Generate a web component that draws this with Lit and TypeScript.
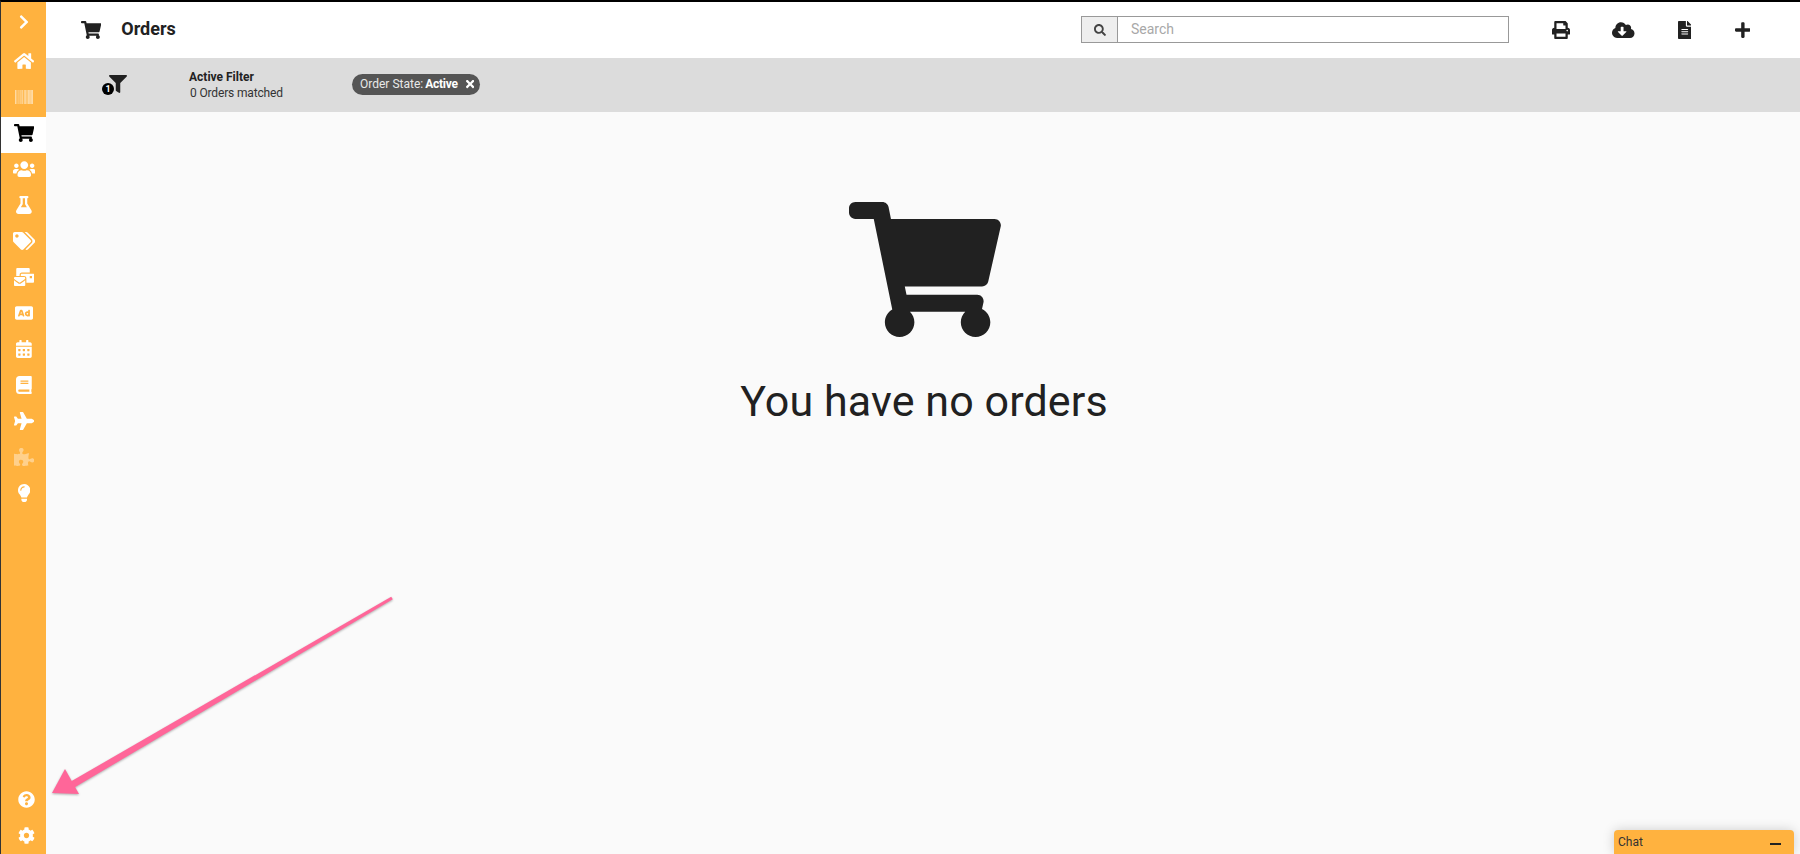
import { LitElement, html, svg, css } from "lit";
import { customElement } from "lit/decorators.js";

type Ic = [number, string];
const I: Record<string, Ic> = {
  cart: [576, "M528.12 301.319l47.273-208C578.806 78.301 567.391 64 551.99 64H159.208l-9.166-44.81C147.758 8.021 137.93 0 126.529 0H24C10.745 0 0 10.745 0 24v16c0 13.255 10.745 24 24 24h69.883l70.248 343.435C147.325 417.1 136 435.222 136 456c0 30.928 25.072 56 56 56s56-25.072 56-56c0-15.674-6.447-29.835-16.824-40h209.647C430.447 426.165 424 440.326 424 456c0 30.928 25.072 56 56 56s56-25.072 56-56c0-22.172-12.888-41.332-31.579-50.405l5.517-24.276c3.413-15.018-8.002-29.319-23.403-29.319H218.117l-6.545-32h293.145c11.206 0 20.92-7.754 23.403-18.681z"],
  chevron: [320, "M285.476 272.971L91.132 467.314c-9.373 9.373-24.569 9.373-33.941 0l-22.667-22.667c-9.357-9.357-9.375-24.522-.04-33.901L188.505 256 34.484 101.255c-9.335-9.379-9.317-24.544.04-33.901l22.667-22.667c9.373-9.373 24.569-9.373 33.941 0L285.475 239.03c9.373 9.372 9.373 24.568.001 33.941z"],
  home: [576, "M280.37 148.26L96 300.11V464a16 16 0 0 0 16 16l112.06-.29a16 16 0 0 0 15.92-16V368a16 16 0 0 1 16-16h64a16 16 0 0 1 16 16v95.64a16 16 0 0 0 16 16.05L464 480a16 16 0 0 0 16-16V300L295.67 148.26a12.19 12.19 0 0 0-15.3 0zM571.6 251.47L488 182.56V44.05a12 12 0 0 0-12-12h-56a12 12 0 0 0-12 12v72.61L318.47 43a48 48 0 0 0-61 0L4.34 251.47a12 12 0 0 0-1.6 16.9l25.5 31A12 12 0 0 0 45.15 301l235.22-193.74a12.19 12.19 0 0 1 15.3 0L530.9 301a12 12 0 0 0 16.9-1.6l25.5-31a12 12 0 0 0-1.7-16.93z"],
  users: [640, "M96 224c35.3 0 64-28.7 64-64s-28.7-64-64-64-64 28.7-64 64 28.7 64 64 64zm448 0c35.3 0 64-28.7 64-64s-28.7-64-64-64-64 28.7-64 64 28.7 64 64 64zm32 32h-64c-17.6 0-33.5 7.1-45.1 18.6 40.3 22.1 68.9 62 75.1 109.4h66c17.7 0 32-14.3 32-32v-32c0-35.3-28.7-64-64-64zm-256 0c61.9 0 112-50.1 112-112S381.9 32 320 32 208 82.1 208 144s50.1 112 112 112zm76.8 32h-8.3c-20.8 10-43.9 16-68.5 16s-47.6-6-68.5-16h-8.3C179.6 288 128 339.6 128 403.2V432c0 26.5 21.5 48 48 48h288c26.5 0 48-21.5 48-48v-28.8c0-63.6-51.6-115.2-115.2-115.2zm-223.7-13.4C161.5 263.1 145.6 256 128 256H64c-35.3 0-64 28.7-64 64v32c0 17.7 14.3 32 32 32h65.9c6.3-47.4 34.9-87.3 75.2-109.4z"],
  flask: [448, "M437.2 403.5L320 215V64h8c13.3 0 24-10.7 24-24V24c0-13.3-10.7-24-24-24H120c-13.3 0-24 10.7-24 24v16c0 13.3 10.7 24 24 24h8v151L10.8 403.5C-18.5 450.6 15.3 512 70.9 512h306.2c55.7 0 89.4-61.5 60.1-108.5zM137.9 320l48.2-77.6c3.7-5.2 5.8-11.6 5.8-18.4V64h64v160c0 6.9 2.2 13.2 5.8 18.4l48.2 77.6h-172z"],
  tags: [640, "M497.941 225.941L286.059 14.059A48 48 0 0 0 252.118 0H48C21.49 0 0 21.49 0 48v204.118a48 48 0 0 0 14.059 33.941l211.882 211.882c18.744 18.745 49.136 18.746 67.882 0l204.118-204.118c18.745-18.745 18.745-49.137 0-67.882zM112 160c-26.51 0-48-21.49-48-48s21.49-48 48-48 48 21.49 48 48-21.49 48-48 48zm513.941 133.823L421.823 497.941c-18.745 18.745-49.137 18.745-67.882 0l-.36-.36L527.64 323.522c16.999-16.999 26.36-39.6 26.36-63.64s-9.362-46.641-26.36-63.64L331.397 0h48.721a48 48 0 0 1 33.941 14.059l211.882 211.882c18.745 18.745 18.745 49.137 0 67.882z"],
  mail: [576, "M160 448c-25.6 0-51.2-22.4-64-32-64-44.8-83.2-60.8-96-70.4V480c0 17.67 14.33 32 32 32h256c17.67 0 32-14.33 32-32V345.6c-12.8 9.6-32 25.6-96 70.4-12.8 9.6-38.4 32-64 32zm128-192H32c-17.67 0-32 14.33-32 32v16c25.6 19.2 22.4 19.2 115.2 86.4 9.6 6.4 28.8 25.6 44.8 25.6s35.2-19.2 44.8-22.4c92.8-67.2 89.6-67.2 115.2-86.4V288c0-17.67-14.33-32-32-32zm256-96H224c-17.67 0-32 14.33-32 32v32h96c33.21 0 60.59 25.42 63.71 57.82l.29-.22V416h192c17.67 0 32-14.33 32-32V192c0-17.67-14.33-32-32-32zm-32 128h-64v-64h64v64zm-352-96c0-35.29 28.71-64 64-64h224V32c0-17.67-14.33-32-32-32H96C78.33 0 64 14.33 64 32v192h96v-32z"],
  ad: [512, "M157.52 272h36.96L176 218.78 157.52 272zM352 256c-13.23 0-24 10.77-24 24s10.77 24 24 24 24-10.77 24-24-10.77-24-24-24zM464 64H48C21.5 64 0 85.5 0 112v288c0 26.5 21.5 48 48 48h416c26.5 0 48-21.5 48-48V112c0-26.5-21.5-48-48-48zM250.58 352h-16.94c-6.81 0-12.88-4.32-15.12-10.75L211.15 320h-70.29l-7.38 21.25A16 16 0 0 1 118.36 352h-16.94c-11.01 0-18.73-10.85-15.12-21.25L140 176.12A23.995 23.995 0 0 1 162.67 160h26.66A23.99 23.99 0 0 1 212 176.13l53.69 154.62c3.61 10.4-4.11 21.25-15.11 21.25zM424 336c0 8.84-7.16 16-16 16h-16c-4.85 0-9.04-2.27-11.98-5.68-8.62 3.66-18.09 5.68-28.02 5.68-39.7 0-72-32.3-72-72s32.3-72 72-72c8.46 0 16.46 1.73 24 4.42V176c0-8.84 7.16-16 16-16h16c8.84 0 16 7.16 16 16v160z"],
  calendar: [448, "M0 464c0 26.5 21.5 48 48 48h352c26.5 0 48-21.5 48-48V192H0v272zm320-196c0-6.6 5.4-12 12-12h40c6.6 0 12 5.4 12 12v40c0 6.6-5.4 12-12 12h-40c-6.6 0-12-5.4-12-12v-40zm0 128c0-6.6 5.4-12 12-12h40c6.6 0 12 5.4 12 12v40c0 6.6-5.4 12-12 12h-40c-6.6 0-12-5.4-12-12v-40zM192 268c0-6.6 5.4-12 12-12h40c6.6 0 12 5.4 12 12v40c0 6.6-5.4 12-12 12h-40c-6.6 0-12-5.4-12-12v-40zm0 128c0-6.6 5.4-12 12-12h40c6.6 0 12 5.4 12 12v40c0 6.6-5.4 12-12 12h-40c-6.6 0-12-5.4-12-12v-40zM64 268c0-6.6 5.4-12 12-12h40c6.6 0 12 5.4 12 12v40c0 6.6-5.4 12-12 12H76c-6.6 0-12-5.4-12-12v-40zm0 128c0-6.6 5.4-12 12-12h40c6.6 0 12 5.4 12 12v40c0 6.6-5.4 12-12 12H76c-6.6 0-12-5.4-12-12v-40zM400 64h-48V16c0-8.8-7.2-16-16-16h-32c-8.8 0-16 7.2-16 16v48H160V16c0-8.8-7.2-16-16-16h-32c-8.8 0-16 7.2-16 16v48H48C21.5 64 0 85.5 0 112v48h448v-48c0-26.5-21.5-48-48-48z"],
  book: [448, "M448 360V24c0-13.3-10.7-24-24-24H96C43 0 0 43 0 96v320c0 53 43 96 96 96h328c13.3 0 24-10.7 24-24v-16c0-7.5-3.5-14.3-8.9-18.7-4.2-15.4-4.2-59.3 0-74.7 5.4-4.3 8.9-11.1 8.9-18.6zM128 134c0-3.3 2.7-6 6-6h212c3.3 0 6 2.7 6 6v20c0 3.3-2.7 6-6 6H134c-3.3 0-6-2.7-6-6v-20zm0 64c0-3.3 2.7-6 6-6h212c3.3 0 6 2.7 6 6v20c0 3.3-2.7 6-6 6H134c-3.3 0-6-2.7-6-6v-20zm253.4 250H96c-17.7 0-32-14.3-32-32 0-17.6 14.4-32 32-32h285.4c-1.9 17.1-1.9 46.9 0 64z"],
  plane: [576, "M480 192H365.71L260.61 8.06A16.014 16.014 0 0 0 246.71 0h-65.5c-10.63 0-18.3 10.17-15.38 20.39L214.86 192H112l-43.2-57.6c-3.02-4.03-7.77-6.4-12.8-6.4H16.01C5.6 128-2.04 137.78.49 147.88L32 256 .49 364.12C-2.04 374.22 5.6 384 16.01 384H56c5.04 0 9.78-2.37 12.8-6.4L112 320h102.86l-49.03 171.6c-2.92 10.22 4.75 20.4 15.38 20.4h65.5c5.74 0 11.04-3.08 13.89-8.06L365.71 320H480c35.35 0 96-28.65 96-64s-60.65-64-96-64z"],
  puzzle: [576, "M519.442 288.651c-41.519 0-59.5 31.593-82.058 31.593C377.409 320.244 432 144 432 144s-196.288 80-196.288-3.297c0-35.827 36.288-46.25 36.288-85.985C272 19.216 243.885 0 210.539 0c-34.654 0-66.366 18.891-66.366 56.346 0 41.364 31.711 59.277 31.711 81.75C175.885 207.719 0 166.758 0 166.758v333.237s178.635 41.047 178.635-28.662c0-22.473-40-40.107-40-81.471 0-37.456 29.25-56.346 63.577-56.346 33.673 0 61.788 19.216 61.788 54.717 0 39.735-36.288 50.158-36.288 85.985 0 60.803 129.675 25.73 181.23 25.73 0 0-34.725-120.101 25.827-120.101 35.962 0 46.423 36.152 86.308 36.152C556.712 416 576 387.99 576 354.443c0-34.199-18.962-65.792-56.558-65.792z"],
  bulb: [352, "M96.06 454.35c.01 6.29 1.87 12.45 5.36 17.69l17.09 25.69a31.99 31.99 0 0 0 26.64 14.28h61.71a31.99 31.99 0 0 0 26.64-14.28l17.09-25.69a31.989 31.989 0 0 0 5.36-17.69l.04-38.35H96.01l.05 38.35zM0 176c0 44.37 16.45 84.85 43.56 115.78 16.52 18.85 42.36 58.23 52.21 91.45.04.26.07.52.11.78h160.24c.04-.26.07-.51.11-.78 9.85-33.22 35.69-72.6 52.21-91.45C335.55 260.85 352 220.37 352 176 352 78.61 272.91-.3 175.45 0 73.44.31 0 82.97 0 176zm176-80c-44.11 0-80 35.89-80 80 0 8.84-7.16 16-16 16s-16-7.16-16-16c0-61.76 50.24-112 112-112 8.84 0 16 7.16 16 16s-7.16 16-16 16z"],
  question: [512, "M504 256c0 136.997-111.043 248-248 248S8 392.997 8 256C8 119.083 119.043 8 256 8s248 111.083 248 248zM262.655 90c-54.497 0-89.255 22.957-116.549 63.758-3.536 5.286-2.353 12.415 2.715 16.258l34.699 26.31c5.205 3.947 12.621 3.008 16.665-2.122 17.864-22.658 30.113-35.797 57.303-35.797 20.429 0 45.698 13.148 45.698 32.958 0 14.976-12.363 22.667-32.534 33.976C247.128 238.528 216 254.941 216 296v4c0 6.627 5.373 12 12 12h56c6.627 0 12-5.373 12-12v-1.333c0-28.462 83.186-29.647 83.186-106.667 0-58.002-60.165-102-116.531-102zM256 338c-25.365 0-46 20.635-46 46 0 25.364 20.635 46 46 46s46-20.636 46-46c0-25.365-20.635-46-46-46z"],
  cog: [512, "M487.4 315.7l-42.6-24.6c4.3-23.2 4.3-47 0-70.2l42.6-24.6c4.9-2.8 7.1-8.6 5.5-14-11.1-35.6-30-67.8-54.7-94.6-3.8-4.1-10-5.1-14.8-2.3L380.8 110c-17.9-15.4-38.5-27.3-60.8-35.1V25.8c0-5.6-3.9-10.5-9.4-11.7-36.7-8.2-74.3-7.8-109.2 0-5.5 1.2-9.4 6.1-9.4 11.7V75c-22.2 7.9-42.8 19.8-60.8 35.1L88.7 85.5c-4.9-2.8-11-1.9-14.8 2.3-24.7 26.7-43.6 58.9-54.7 94.6-1.7 5.4.6 11.2 5.5 14L67.3 221c-4.3 23.2-4.3 47 0 70.2l-42.6 24.6c-4.9 2.8-7.1 8.6-5.5 14 11.1 35.6 30 67.8 54.7 94.6 3.8 4.1 10 5.1 14.8 2.3l42.6-24.6c17.9 15.4 38.5 27.3 60.8 35.1v49.2c0 5.6 3.9 10.5 9.4 11.7 36.7 8.2 74.3 7.8 109.2 0 5.5-1.2 9.4-6.1 9.4-11.7v-49.2c22.2-7.9 42.8-19.8 60.8-35.1l42.6 24.6c4.9 2.8 11 1.9 14.8-2.3 24.7-26.7 43.6-58.9 54.7-94.6 1.5-5.5-.7-11.3-5.6-14.1zM256 336c-44.1 0-80-35.9-80-80s35.9-80 80-80 80 35.9 80 80-35.9 80-80 80z"],
  filter: [512, "M487.976 0H24.028C2.71 0-8.047 25.866 7.058 40.971L192 225.941V432c0 7.831 3.821 15.17 10.237 19.662l80 55.98C298.02 518.69 320 507.493 320 487.98V225.941l184.947-184.97C520.021 25.896 509.338 0 487.976 0z"],
  search: [512, "M505 442.7L405.3 343c-4.5-4.5-10.6-7-17-7H372c27.6-35.3 44-79.7 44-128C416 93.1 322.9 0 208 0S0 93.1 0 208s93.1 208 208 208c48.3 0 92.7-16.4 128-44v16.3c0 6.4 2.5 12.5 7 17l99.7 99.7c9.4 9.4 24.6 9.4 33.9 0l28.3-28.3c9.4-9.4 9.4-24.6.1-34zM208 336c-70.7 0-128-57.2-128-128 0-70.7 57.2-128 128-128 70.7 0 128 57.2 128 128 0 70.7-57.2 128-128 128z"],
  print: [512, "M448 192V77.25c0-8.49-3.37-16.62-9.37-22.63L393.37 9.37c-6-6-14.14-9.37-22.63-9.37H96C78.33 0 64 14.33 64 32v160c-35.35 0-64 28.65-64 64v112c0 8.84 7.16 16 16 16h48v96c0 17.67 14.33 32 32 32h320c17.67 0 32-14.33 32-32v-96h48c8.84 0 16-7.16 16-16V256c0-35.35-28.65-64-64-64zm-64 256H128v-96h256v96zm0-224H128V64h192v48c0 8.84 7.16 16 16 16h48v96zm48 72c-13.25 0-24-10.75-24-24 0-13.26 10.75-24 24-24s24 10.74 24 24c0 13.25-10.75 24-24 24z"],
  cloud: [640, "M537.6 226.6c4.1-10.7 6.4-22.4 6.4-34.6 0-53-43-96-96-96-19.7 0-38.1 6-53.3 16.2C367 64.2 315.3 32 256 32c-88.4 0-160 71.6-160 160 0 2.7.1 5.4.2 8.1C40.2 219.8 0 273.2 0 336c0 79.5 64.5 144 144 144h368c70.7 0 128-57.3 128-128 0-61.9-44-113.6-102.4-125.4zm-132.9 88.7L299.3 420.7c-6.2 6.2-16.4 6.2-22.6 0L171.3 315.3c-10.1-10.1-2.9-27.3 11.3-27.3H248V176c0-8.8 7.2-16 16-16h48c8.8 0 16 7.2 16 16v112h65.4c14.2 0 21.4 17.2 11.3 27.3z"],
  file: [384, "M224 136V0H24C10.7 0 0 10.7 0 24v464c0 13.3 10.7 24 24 24h336c13.3 0 24-10.7 24-24V160H248c-13.2 0-24-10.8-24-24zm64 236c0 6.6-5.4 12-12 12H108c-6.6 0-12-5.4-12-12v-8c0-6.6 5.4-12 12-12h168c6.6 0 12 5.4 12 12v8zm0-64c0 6.6-5.4 12-12 12H108c-6.6 0-12-5.4-12-12v-8c0-6.6 5.4-12 12-12h168c6.6 0 12 5.4 12 12v8zm0-72v8c0 6.6-5.4 12-12 12H108c-6.6 0-12-5.4-12-12v-8c0-6.6 5.4-12 12-12h168c6.6 0 12 5.4 12 12zm96-114.1v6.1H256V0h6.1c6.4 0 12.5 2.5 17 7l97.9 98c4.5 4.5 7 10.6 7 16.9z"],
  plus: [448, "M416 208H272V64c0-17.67-14.33-32-32-32h-32c-17.67 0-32 14.33-32 32v144H32c-17.67 0-32 14.33-32 32v32c0 17.67 14.33 32 32 32h144v144c0 17.67 14.33 32 32 32h32c17.67 0 32-14.33 32-32V304h144c17.67 0 32-14.33 32-32v-32c0-17.67-14.33-32-32-32z"],
  times: [352, "M242.72 256l100.07-100.07c12.28-12.28 12.28-32.19 0-44.48l-22.24-22.24c-12.28-12.28-32.19-12.28-44.48 0L176 189.28 75.93 89.21c-12.28-12.28-32.19-12.28-44.48 0L9.21 111.45c-12.28 12.28-12.28 32.19 0 44.48L109.28 256 9.21 356.07c-12.28 12.28-12.28 32.19 0 44.48l22.24 22.24c12.28 12.28 32.2 12.28 44.48 0L176 322.72l100.07 100.07c12.28 12.28 32.2 12.28 44.48 0l22.24-22.24c12.28-12.28 12.28-32.19 0-44.48L242.72 256z"],
};

const ic = (n: string, cls = "") =>
  html`<svg class="ic ${cls}" viewBox="0 0 ${I[n][0]} 512" fill="currentColor"><path d=${I[n][1]}></path></svg>`;

const bars: [number, number][] = [[0,18],[27,9],[54,9],[99,9],[135,18],[180,9],[198,9],[216,9],[252,18],[297,18],[333,18],[369,18],[396,18],[441,27],[477,9],[494,18]];
const barcode = html`<svg class="ic bar" viewBox="0 0 512 384" preserveAspectRatio="none" fill="currentColor">
  ${bars.map(([x, w]) => svg`<rect x=${x} y="0" width=${w} height="384"></rect>`)}
</svg>`;

const NAV = ["home", "barcode", "cart", "users", "flask", "tags", "mail", "ad", "calendar", "book", "plane", "puzzle", "bulb"];

@customElement("app-root")
export class AppRoot extends LitElement {
  static styles = css`
    :host {
      display: flex;
      position: relative;
      box-sizing: border-box;
      width: 100%;
      height: 854px;
      overflow: hidden;
      border-top: 2px solid #000;
      border-left: 1px solid #333;
      background: #fafafa;
      font-family: Roboto, "Liberation Sans", sans-serif;
      color: #212121;
    }
    .ic { display: block; height: 18px; width: auto; flex: none; }
    .side {
      width: 45px;
      flex: none;
      background: #ffb23f;
      color: #fff;
      display: flex;
      flex-direction: column;
    }
    .toggle {
      height: 43px;
      flex: none;
      box-sizing: border-box;
      padding: 0 0 3px 1px;
      display: flex;
      align-items: center;
      justify-content: center;
    }
    .toggle .ic { height: 16px; }
    .item {
      height: 36px;
      flex: none;
      box-sizing: border-box;
      padding: 0 0 5px 1px;
      display: flex;
      align-items: center;
      justify-content: center;
    }
    .item.active { background: #fff; color: #000; }
    .item .dim { opacity: 0.4; }
    .ic.bar { height: 14px; width: 18px; opacity: 0.8; }
    .lower { margin-top: auto; padding-bottom: 1px; }
    .lower .item { padding: 0 0 0 5px; }
    .lower .ic { height: 17px; }
    .main { flex: 1; min-width: 0; display: flex; flex-direction: column; }
    .head {
      height: 56px;
      flex: none;
      background: #fff;
      display: flex;
      align-items: center;
      padding-left: 35px;
      padding-bottom: 1px;
      box-sizing: border-box;
    }
    .title { margin: -2px 0 0 20px; font-size: 18px; font-weight: 700; }
    .search {
      margin-left: auto;
      width: 428px;
      height: 27px;
      box-sizing: border-box;
      border: 1px solid #999;
      display: flex;
      align-self: center;
    }
    .pre {
      width: 36px;
      flex: none;
      box-sizing: border-box;
      background: #eee;
      border-right: 1px solid #999;
      display: flex;
      align-items: center;
      justify-content: center;
      color: #444;
    }
    .pre .ic { height: 12px; }
    .ph { padding-left: 13px; font-size: 14px; line-height: 25px; color: #a8a8a8; }
    .acts { display: flex; margin-left: 21px; margin-right: 27px; }
    .act { width: 61px; display: flex; justify-content: center; }
    .act:nth-child(2) { margin-left: 2px; }
    .act:nth-child(4) { margin-left: -3px; }
    .band {
      height: 54px;
      flex: none;
      background: #dcdcdc;
      display: flex;
      align-items: center;
      box-sizing: border-box;
      padding-left: 55px;
      font-size: 12px;
    }
    .fil { position: relative; width: 89px; flex: none; padding: 0 0 2px 8px; box-sizing: border-box; }
    .badge {
      position: absolute;
      left: 1px;
      top: 8px;
      width: 12px;
      height: 12px;
      border-radius: 50%;
      background: #000;
      color: #fff;
      font-size: 9px;
      font-weight: 700;
      line-height: 12px;
      text-align: center;
    }
    .info { width: 162px; line-height: 16px; flex: none; color: #333; letter-spacing: -0.15px; margin-top: -1px; }
    .info b { display: block; font-weight: 700; color: #222; letter-spacing: 0; margin-left: -1px; }
    .chip {
      height: 21px;
      width: 128px;
      box-sizing: border-box;
      border-radius: 11px;
      background: #555;
      color: #e8e8e8;
      display: flex;
      align-items: center;
      padding-left: 8px;
      margin-top: -2px;
      white-space: pre;
    }
    .chip b { color: #fff; font-weight: 700; letter-spacing: -0.25px; margin-left: -1px; }
    .chip .ic { height: 12px; margin-left: 8px; color: #fff; }
    .empty {
      flex: 1;
      display: flex;
      flex-direction: column;
      align-items: center;
      padding: 90px 0 0 2px;
    }
    .ic.big { height: 135px; margin-left: 2px; }
    .msg { margin-top: 34px; font-size: 43px; letter-spacing: 0.1px; font-weight: 400; line-height: 60px; }
    .arrow { position: absolute; left: -1px; top: -2px; width: 1800px; height: 854px; pointer-events: none; filter: drop-shadow(0 1px 1px rgba(0,0,0,.3)); }
    .chat {
      position: absolute;
      left: 1613px;
      top: 828px;
      width: 180px;
      height: 24px;
      box-sizing: border-box;
      background: #ffb23f;
      border-radius: 4px 4px 0 0;
      box-shadow: 0 0 12px rgba(0,0,0,.18);
      display: flex;
      align-items: center;
      justify-content: space-between;
      padding: 0 13px 0 4px;
      font-size: 12px;
      color: #333;
    }
    .min { width: 11px; height: 2px; background: #222; margin-top: 3px; }
  `;

  render() {
    return html`
      <nav class="side">
        <div class="toggle">${ic("chevron")}</div>
        ${NAV.map((n) => html`<div class="item ${n === "cart" ? "active" : ""}">
          ${n === "barcode" ? barcode : ic(n, n === "puzzle" ? "dim" : "")}
        </div>`)}
        <div class="lower">
          <div class="item">${ic("question")}</div>
          <div class="item">${ic("cog")}</div>
        </div>
      </nav>
      <div class="main">
        <header class="head">
          ${ic("cart")}
          <div class="title">Orders</div>
          <div class="search">
            <div class="pre">${ic("search")}</div>
            <div class="ph">Search</div>
          </div>
          <div class="acts">
            <div class="act">${ic("print")}</div>
            <div class="act">${ic("cloud")}</div>
            <div class="act">${ic("file")}</div>
            <div class="act">${ic("plus")}</div>
          </div>
        </header>
        <section class="band">
          <div class="fil">${ic("filter")}<span class="badge">1</span></div>
          <div class="info"><b>Active Filter</b>0 Orders matched</div>
          <div class="chip">Order State: <b>Active</b>${ic("times")}</div>
        </section>
        <section class="empty">
          ${ic("cart", "big")}
          <div class="msg">You have no orders</div>
        </section>
      </div>
      <svg class="arrow" viewBox="0 0 1800 854">
        <polygon points="392.8,599.3 391.2,596.7 68.2,783 71.8,789" fill="#ff6699"></polygon>
        <polygon points="65,769 52,793 79,794" fill="#ff6699"></polygon>
      </svg>
      <div class="chat"><span>Chat</span><span class="min"></span></div>
    `;
  }
}
